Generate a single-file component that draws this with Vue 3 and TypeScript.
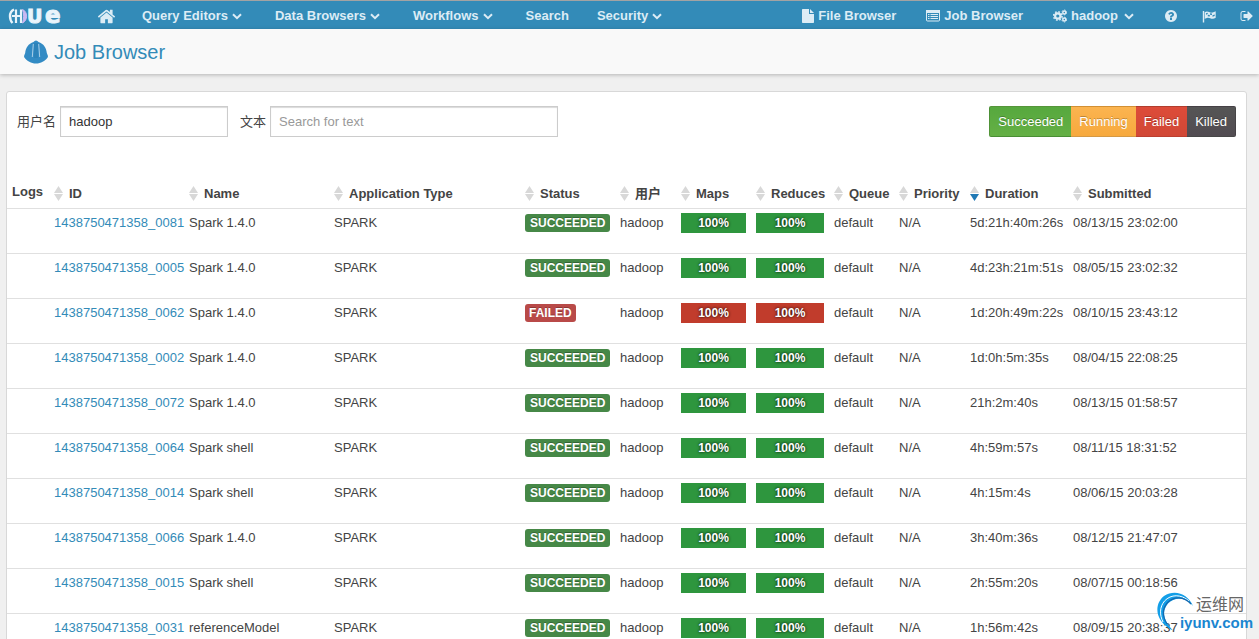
<script setup lang="ts">
import { ref, computed } from 'vue'

interface Job {
  id: string
  name: string
  status: 'SUCCEEDED' | 'FAILED'
  duration: string
  submitted: string
}

interface NavItem {
  label: string
  menu: boolean
}

const navItems: NavItem[] = [
  { label: 'Query Editors', menu: true },
  { label: 'Data Browsers', menu: true },
  { label: 'Workflows', menu: true },
  { label: 'Search', menu: false },
  { label: 'Security', menu: true },
]

const columns = [
  { key: 'id', label: 'ID' },
  { key: 'name', label: 'Name' },
  { key: 'type', label: 'Application Type' },
  { key: 'status', label: 'Status' },
  { key: 'user', label: '用户' },
  { key: 'maps', label: 'Maps' },
  { key: 'reduces', label: 'Reduces' },
  { key: 'queue', label: 'Queue' },
  { key: 'priority', label: 'Priority' },
  { key: 'duration', label: 'Duration' },
  { key: 'submitted', label: 'Submitted' },
]

const filters = ['Succeeded', 'Running', 'Failed', 'Killed']

const jobs: Job[] = [
  { id: '1438750471358_0081', name: 'Spark 1.4.0', status: 'SUCCEEDED', duration: '5d:21h:40m:26s', submitted: '08/13/15 23:02:00' },
  { id: '1438750471358_0005', name: 'Spark 1.4.0', status: 'SUCCEEDED', duration: '4d:23h:21m:51s', submitted: '08/05/15 23:02:32' },
  { id: '1438750471358_0062', name: 'Spark 1.4.0', status: 'FAILED', duration: '1d:20h:49m:22s', submitted: '08/10/15 23:43:12' },
  { id: '1438750471358_0002', name: 'Spark 1.4.0', status: 'SUCCEEDED', duration: '1d:0h:5m:35s', submitted: '08/04/15 22:08:25' },
  { id: '1438750471358_0072', name: 'Spark 1.4.0', status: 'SUCCEEDED', duration: '21h:2m:40s', submitted: '08/13/15 01:58:57' },
  { id: '1438750471358_0064', name: 'Spark shell', status: 'SUCCEEDED', duration: '4h:59m:57s', submitted: '08/11/15 18:31:52' },
  { id: '1438750471358_0014', name: 'Spark shell', status: 'SUCCEEDED', duration: '4h:15m:4s', submitted: '08/06/15 20:03:28' },
  { id: '1438750471358_0066', name: 'Spark 1.4.0', status: 'SUCCEEDED', duration: '3h:40m:36s', submitted: '08/12/15 21:47:07' },
  { id: '1438750471358_0015', name: 'Spark shell', status: 'SUCCEEDED', duration: '2h:55m:20s', submitted: '08/07/15 00:18:56' },
  { id: '1438750471358_0031', name: 'referenceModel', status: 'SUCCEEDED', duration: '1h:56m:42s', submitted: '08/09/15 20:38:37' },
]

const user = ref('hadoop')
const text = ref('')
const sortKey = ref('duration')

const visibleJobs = computed(() =>
  jobs.filter((j) => (j.id + ' ' + j.name).toLowerCase().includes(text.value.toLowerCase())),
)
</script>

<template>
  <div class="page">
    <nav class="navbar">
      <a class="brand" href="#" aria-label="Hue">
        <svg width="58" height="28" viewBox="0 0 58 28">
          <path d="M6 7.500C3 9 2 11 2 14S3 19.500 4.500 21" fill="none" stroke="#e9f4fb" stroke-width="2.400" />
          <path d="M4 14h9M8 7.500V21M13 7.500V21" fill="none" stroke="#e9f4fb" stroke-width="2.200" />
          <path d="M14.500 7.500c5.500 2.200 5.500 11 0 13.500 1.500-4 1.500-9.500 0-13.500z" fill="#c9b8f2" stroke="#c9b8f2" />
          <text x="19" y="21" class="brand-u">U</text>
          <text x="37" y="21" class="brand-e">e</text>
        </svg>
      </a>
      <a class="home" href="#" aria-label="Home">
        <svg width="19" height="19" viewBox="0 0 1792 1792" fill="currentColor">
          <path d="M1472 992v480q0 26-19 45t-45 19h-384v-384h-256v384h-384q-26 0-45-19t-19-45v-480q0-1 .5-3t.5-3l575-474 575 474q1 2 1 6zm223-69l-62 74q-8 9-21 11h-3q-13 0-21-7l-692-577-692 577q-12 8-24 7-13-2-21-11l-62-74q-8-10-7-23.500t11-21.500l719-599q32-26 76-26t76 26l244 204v-195q0-14 9-23t23-9h192q14 0 23 9t9 23v408l219 182q10 8 11 21.500t-7 23.500z" />
        </svg>
      </a>
      <a v-for="item in navItems" :key="item.label" class="nav-link" :class="{ menu: item.menu }" href="#">
        {{ item.label }}
        <svg v-if="item.menu" class="caret" width="10" height="7" viewBox="0 0 10 7">
          <path d="M1 1.200l4 4 4-4" fill="none" stroke="currentColor" stroke-width="2" />
        </svg>
      </a>
      <div class="nav-right">
        <a class="tool" href="#">
          <svg width="12" height="14" viewBox="0 0 12 14" fill="currentColor">
            <path d="M.7 0H7v5h5v8.300q0 .7-.7.700H.7q-.7 0-.7-.7V.7Q0 0 .7 0zM8 0l4 4H8z" />
          </svg>
          File Browser
        </a>
        <a class="tool" href="#">
          <svg width="14" height="12" viewBox="0 0 14 12" fill="none" stroke="currentColor">
            <rect x=".5" y=".5" width="13" height="10.500" rx="1" />
            <path d="M0 1.500h14" stroke-width="3" />
            <path d="M2 4.500h1.500M2 6.500h1.500M2 8.500h1.500M4.500 4.500H12M4.500 6.500H12M4.500 8.500H12" />
          </svg>
          Job Browser
        </a>
        <a class="tool" href="#">
          <svg width="14" height="14" viewBox="0 0 14 14" fill="none" stroke="currentColor">
            <circle cx="4.800" cy="7" r="2.700" stroke-width="2.200" />
            <circle cx="4.800" cy="7" r="4.200" stroke-width="1.600" stroke-dasharray="1.650 1.650" />
            <circle cx="11.300" cy="3.400" r="1.500" stroke-width="1.500" />
            <circle cx="11.300" cy="3.400" r="2.400" stroke-width="1" stroke-dasharray="1.260 1.260" />
            <circle cx="11.300" cy="10.600" r="1.500" stroke-width="1.500" />
            <circle cx="11.300" cy="10.600" r="2.400" stroke-width="1" stroke-dasharray="1.260 1.260" />
          </svg>
          hadoop
          <svg class="caret" width="10" height="7" viewBox="0 0 10 7">
            <path d="M1 1.200l4 4 4-4" fill="none" stroke="currentColor" stroke-width="2" />
          </svg>
        </a>
        <a class="icon-link" href="#" aria-label="Help">
          <svg width="14" height="14" viewBox="0 0 1792 1792" fill="currentColor">
            <path d="M1024 1376v-192q0-14-9-23t-23-9h-192q-14 0-23 9t-9 23v192q0 14 9 23t23 9h192q14 0 23-9t9-23zm256-672q0-88-55.500-163t-138.500-116-170-41q-243 0-371 213-15 24 8 42l132 100q7 6 19 6 16 0 25-12 53-68 86-92 34-24 86-24 48 0 85.500 26t37.500 59q0 38-20 61t-68 45q-63 28-115.500 86.500t-52.500 125.500v36q0 14 9 23t23 9h192q14 0 23-9t9-23q0-19 21.500-49.500t54.500-49.500q32-18 49-28.500t46-35 44.500-48 28-60.500 12.500-81zm384 192q0 209-103 385.500t-279.500 279.500-385.500 103-385.500-103-279.500-279.500-103-385.500 103-385.500 279.500-279.500 385.500-103 385.500 103 279.500 279.500 103 385.500z" />
          </svg>
        </a>
        <a class="icon-link" href="#" aria-label="Tours">
          <svg width="14" height="13" viewBox="0 0 14 13">
            <path d="M1.500 1v11.500" fill="none" stroke="currentColor" stroke-width="1.400" />
            <path fill-rule="evenodd" fill="currentColor" d="M2.700 2.300c3-2 4.700.7 7.300.3 1.300-.2 2.300-.9 3.700-1.400v6.600c-4.200 2.500-5.400-.3-7.900-.1-1.200.1-2 .7-3.100 1.200zM4 3.300v1.500l1.700-.7V2.800zM8 3.200v1.500l2 .3V3.500zM5.800 4.800v1.500l2 .2V5zM10.500 5.200v1.500l2.200-.8V4.400z" />
          </svg>
        </a>
        <a class="icon-link" href="#" aria-label="Sign out">
          <svg width="14" height="14" viewBox="0 0 1792 1792" fill="currentColor">
            <path d="M704 1440q0 4 1 20t.5 26.500-3 23.500-10 19.500-20.500 6.500h-320q-119 0-203.500-84.500t-84.500-203.500v-704q0-119 84.500-203.500t203.500-84.500h320q13 0 22.500 9.500t9.500 22.500q0 4 1 20t.5 26.500-3 23.500-10 19.500-20.500 6.500h-320q-66 0-113 47t-47 113v704q0 66 47 113t113 47h312l11.500 1 11.500 3 8 5.500 7 9 2 13.500zm928-544q0 26-19 45l-544 544q-19 19-45 19t-45-19-19-45v-288h-448q-26 0-45-19t-19-45v-384q0-26 19-45t45-19h448v-288q0-26 19-45t45-19 45 19l544 544q19 19 19 45z" />
          </svg>
        </a>
      </div>
    </nav>

    <header class="subnav">
      <svg width="24" height="24" viewBox="0 0 24 24">
        <path d="M9.500 2Q10.500.4 12 .4T14.500 2C19.500 3.500 22.500 8 22.800 13l1 2.600q.4 1.200-.4 2.200C21 21 17 23.600 12 23.600S3 21 .6 17.800q-.8-1 -.4-2.200L1.200 13C1.500 8 4.500 3.500 9.500 2z" fill="#338bc4" />
        <path d="M9.300 4L8.300 17M14.700 4l1 13" fill="none" stroke="#a9cfe8" stroke-width="1" />
        <path d="M11 3v15M13 3v15" fill="none" stroke="#2476ab" stroke-width=".7" />
      </svg>
      <h1>Job Browser</h1>
    </header>

    <main class="card">
      <form class="toolbar" @submit.prevent>
        <label for="user-filter">用户名</label>
        <input id="user-filter" v-model="user" class="user-input" type="text" />
        <label for="text-filter" class="second">文本</label>
        <input id="text-filter" v-model="text" class="text-input" type="text" placeholder="Search for text" />
        <div class="status-filters">
          <button v-for="f in filters" :key="f" type="button" :class="f.toLowerCase()">{{ f }}</button>
        </div>
      </form>

      <table>
        <colgroup>
          <col class="c-logs" />
          <col v-for="c in columns" :key="c.key" :class="'c-' + c.key" />
        </colgroup>
        <thead>
          <tr>
            <th class="logs">Logs</th>
            <th v-for="c in columns" :key="c.key">
              <button type="button" class="sort" :class="{ active: sortKey === c.key }" @click="sortKey = c.key">
                <svg width="9" height="15" viewBox="0 0 9 15">
                  <path class="up" d="M4.500 0L9 7H0z" />
                  <path class="down" d="M0 8h9l-4.500 7z" />
                </svg>
                {{ c.label }}
              </button>
            </th>
          </tr>
        </thead>
        <tbody>
          <tr v-for="job in visibleJobs" :key="job.id">
            <td></td>
            <td><a href="#">{{ job.id }}</a></td>
            <td>{{ job.name }}</td>
            <td>SPARK</td>
            <td><span class="badge" :class="job.status.toLowerCase()">{{ job.status }}</span></td>
            <td>{{ user }}</td>
            <td><div class="bar" :class="job.status.toLowerCase()">100%</div></td>
            <td><div class="bar" :class="job.status.toLowerCase()">100%</div></td>
            <td>default</td>
            <td>N/A</td>
            <td>{{ job.duration }}</td>
            <td>{{ job.submitted }}</td>
          </tr>
        </tbody>
      </table>
    </main>

    <div class="watermark">
      <svg width="38" height="40" viewBox="0 0 38 40" fill="none">
        <path d="M37 15C32 3 19-2 8 5-2 13-2 30 17 39.500 8 30 5 21 12 12.500 19 5 31 6.500 37 15z" fill="#139fe8" />
        <path d="M33 10C25 3 15 3 8.500 10 3.500 16 3.500 24 7 31" stroke="#fff" stroke-width="1" />
        <path d="M35 13C28 5 18 5 11.500 11.500 6 18 6 25 11 33" stroke="#1768ad" stroke-width="1.200" />
      </svg>
      <div class="watermark-text">
        <span class="wm-name">运维网</span>
        <span class="wm-site">iyunv.com</span>
      </div>
    </div>
  </div>
</template>

<style>
html,
body {
  margin: 0;
  background: #f0f0f0;
}
</style>

<style scoped>
.page {
  position: relative;
  height: 100vh;
  overflow: hidden;
  background: #f0f0f0;
  color: #444;
  font-family: "Liberation Sans", "Noto Sans CJK SC", sans-serif;
  font-size: 13px;
  line-height: 20px;
}

a {
  color: #338bb8;
  text-decoration: none;
}

.navbar {
  box-sizing: border-box;
  display: flex;
  align-items: center;
  height: 29px;
  border-top: 1px solid #a3a3a3;
  padding: 2px 5px 0 8px;
  background: #338bb8;
  font-weight: bold;
  white-space: nowrap;
}

.navbar a {
  display: flex;
  align-items: center;
  color: #dcecf5;
}

.brand {
  margin-right: 31px;
}

.brand-u,
.brand-e {
  fill: #e9f4fb;
  stroke: #e9f4fb;
  font-family: "DejaVu Sans", sans-serif;
  font-weight: bold;
}

.brand-u {
  font-size: 19px;
}

.brand-e {
  font-size: 23px;
}

.home {
  margin-right: 26px;
}

.nav-link {
  margin-right: 28px;
}

.nav-link.menu {
  margin-right: 33px;
}

.caret {
  margin-left: 4px;
}

.nav-right {
  display: flex;
  align-items: center;
  margin-left: auto;
}

.tool {
  gap: 4px;
  margin-right: 30px;
}

.tool .caret {
  margin-left: 2px;
}

.icon-link {
  margin-right: 24px;
}

.icon-link:last-child {
  margin-right: 0;
}

.subnav {
  display: flex;
  align-items: center;
  gap: 6px;
  height: 45px;
  padding-left: 24px;
  background: #f9f9f9;
  box-shadow: 0 1px 4px rgba(0, 0, 0, 0.25);
}

h1 {
  margin: 0;
  color: #338bb8;
  font-size: 20px;
  font-weight: normal;
  line-height: 24px;
}

.card {
  margin: 17px 12px 0 6px;
  border: 1px solid #d8d8d8;
  border-radius: 3px;
  background: #fff;
}

.toolbar {
  display: flex;
  align-items: center;
  padding: 14px 10px 45px;
}

label {
  margin-right: 4px;
}

label.second {
  margin-left: 12px;
}

input {
  box-sizing: border-box;
  height: 31px;
  border: 1px solid #ccc;
  border-radius: 0;
  padding: 4px 8px;
  background: #fff;
  box-shadow: inset 0 1px 1px rgba(0, 0, 0, 0.15);
  color: #333;
  font: inherit;
}

input::placeholder {
  color: #999;
  opacity: 1;
}

.user-input {
  width: 168px;
}

.text-input {
  width: 288px;
}

.status-filters {
  display: flex;
  margin-left: auto;
}

.status-filters button {
  height: 31px;
  border: 1px solid rgba(0, 0, 0, 0.15);
  border-width: 1px 0;
  padding: 0 8px;
  color: #fff;
  font: inherit;
  text-shadow: 0 -1px 0 rgba(0, 0, 0, 0.25);
}

.status-filters button:first-child {
  border-left-width: 1px;
  border-radius: 2px 0 0 2px;
}

.status-filters button:last-child {
  border-right-width: 1px;
  border-radius: 0 2px 2px 0;
}

.status-filters .succeeded {
  background: linear-gradient(#56a83e, #65b045);
}

.status-filters .running {
  background: linear-gradient(#fbb450, #f7a93d);
}

.status-filters .failed {
  background: linear-gradient(#dd4b39, #d14836);
}

.status-filters .killed {
  background: linear-gradient(#555, #524c52);
}

table {
  width: 100%;
  border-collapse: collapse;
  table-layout: fixed;
}

.c-logs { width: 42px; }
.c-id { width: 135px; }
.c-name { width: 145px; }
.c-type { width: 191px; }
.c-status { width: 95px; }
.c-user { width: 61px; }
.c-maps { width: 75px; }
.c-reduces { width: 78px; }
.c-queue { width: 65px; }
.c-priority { width: 71px; }
.c-duration { width: 103px; }
.c-submitted { width: 178px; }

th {
  padding: 0 0 3px 5px;
  text-align: left;
  white-space: nowrap;
}

th.logs {
  padding: 0 0 6px 5px;
  vertical-align: bottom;
}

.sort {
  display: flex;
  align-items: center;
  gap: 6px;
  border: 0;
  padding: 0;
  background: none;
  color: inherit;
  font: inherit;
  font-weight: bold;
}

.sort svg {
  fill: #d8d8d8;
}

.sort.active .down {
  fill: #1f78b4;
}

td {
  box-sizing: border-box;
  height: 45px;
  border-top: 1px solid #e0e0e0;
  padding: 4px 5px;
  vertical-align: top;
  white-space: nowrap;
}

.badge {
  display: inline-block;
  border-radius: 3px;
  padding: 0 5px;
  color: #fff;
  font-size: 12px;
  font-weight: bold;
  line-height: 18px;
  text-shadow: 0 -1px 0 rgba(0, 0, 0, 0.25);
}

.badge.succeeded {
  background: #468847;
}

.badge.failed {
  padding: 0 4px;
  background: #b94a48;
}

.bar {
  height: 20px;
  color: #fff;
  font-size: 12px;
  font-weight: bold;
  text-align: center;
  text-shadow: 0 0 3px #000;
}

.bar.succeeded {
  background: #2e963e;
}

.bar.failed {
  background: #c13c2c;
}

.watermark {
  position: absolute;
  right: 6px;
  bottom: 8px;
  display: flex;
  align-items: flex-end;
  pointer-events: none;
}

.watermark-text {
  display: flex;
  flex-direction: column;
  margin-left: -14px;
}

.wm-name {
  padding-left: 16px;
  color: #666;
  font-size: 16px;
  line-height: 20px;
}

.wm-site {
  color: #1a86d0;
  font-size: 15px;
  font-weight: bold;
  line-height: 16px;
}
</style>
